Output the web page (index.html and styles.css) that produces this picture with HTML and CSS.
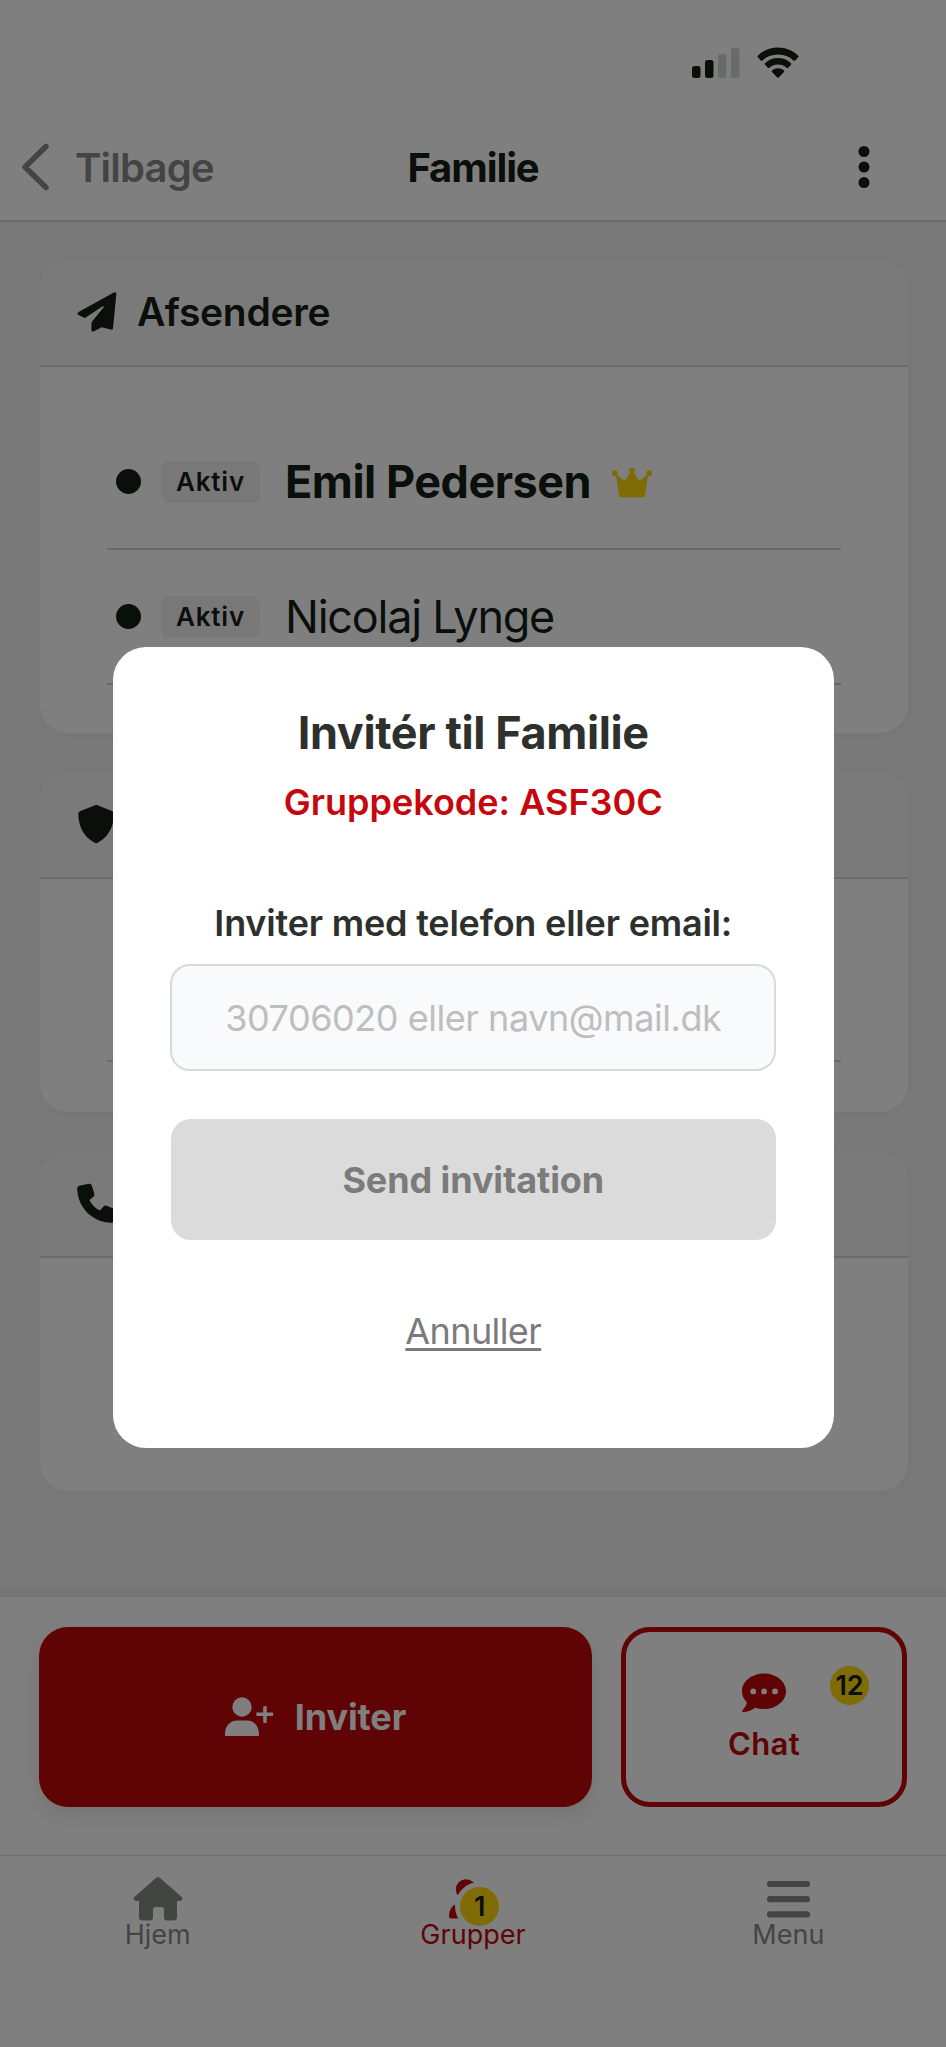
FILE: index.html
```html
<!DOCTYPE html>
<html lang="da">
<head>
<meta charset="utf-8">
<title>Familie</title>
<link rel="stylesheet" href="styles.css">
</head>
<body>
<div class="app">
  <div class="status">
    <svg class="signal" width="48" height="32" viewBox="0 0 48 32"><rect x="0" y="19" width="8.500" height="12" rx="2.500"/><rect x="13" y="13" width="8.500" height="18" rx="2.500"/><g class="faint"><rect x="26" y="7" width="8.500" height="24" rx="2.500"/><rect x="39" y="1" width="8.500" height="30" rx="2.500"/></g></svg>
    <svg class="wifi" width="42" height="32" viewBox="0 0 42 32"><path d="M21 .5C13 .5 6 3.500 .8 8.700q-.8.8 0 1.600L3.800 13.400q.9.8 1.800 0C9.600 9.600 14.800 7.500 21 7.500S32.400 9.600 36.400 13.400q.9.8 1.800 0L41.200 10.300q.8-.8 0-1.600C36 3.500 29 .5 21 .5Z"/><path d="M21 11c-5 0-9.600 1.900-13 5.200q-.8.8 0 1.600l2.800 2.900q.8.700 1.700 0c2.400-2.200 5.100-3.300 8.500-3.300s6.100 1.100 8.500 3.300q.9.700 1.700 0L34 17.800q.8-.8 0-1.600c-3.400-3.300-8-5.200-13-5.200Z"/><path d="M21 21.200c-2.300 0-4.400.8-6 2.200q-.8.800 0 1.600l5 5.200q1 1 2 0l5-5.200q.8-.8 0-1.600c-1.600-1.400-3.700-2.200-6-2.200Z"/></svg>
  </div>
  <header class="topbar">
    <div class="back">
      <svg width="30" height="50" viewBox="0 0 30 50"><path d="M26 4.500 5 25l21 20.500" fill="none" stroke="currentColor" stroke-width="5.500" stroke-linecap="round" stroke-linejoin="round"/></svg>
      <span>Tilbage</span>
    </div>
    <h1>Familie</h1>
    <svg class="kebab" width="12" height="46" viewBox="0 0 12 46"><circle cx="6" cy="7.500" r="5.500"/><circle cx="6" cy="23" r="5.500"/><circle cx="6" cy="38.500" r="5.500"/></svg>
  </header>

  <main class="content">
    <section class="card card-senders">
      <div class="card-head">
        <svg width="40" height="40" viewBox="0 0 40 40"><path d="M39.300 2.200 36 36.200q-.3 1.900-2.200 1.400l-8.300-2.200q-1.200-.3-2 .5l-6.600 3.300q-2.300 1-2.500-1.200v-6.200q0-1.600 1.200-3L26.500 15.400q.6-.8-.2-1.200-.4-.2-1 .2L9.200 25.200q-1.400.9-2.700.3L1.600 23q-2.200-1.400 0-3L36.800.4q2.700-1 2.500 1.800Z"/></svg>
        <h2>Afsendere</h2>
      </div>
      <div class="card-body">
        <div class="row"><i class="dot"></i><span class="tag">Aktiv</span><span class="name own">Emil Pedersen</span>
          <svg class="crown" width="40" height="32" viewBox="0 0 40 32"><path d="M33 30q-.3 1.300-1.500 1.300h-23Q7.300 31.300 7 30L4.300 11 3 10.200A3 3 0 1 1 5.700 8.200L6 9.400l5 4.200q1.600 1.200 3-.4l3.800-6.600a3 3 0 1 1 4.400 0l3.800 6.600q1.200 1.600 3 .4l5-4.200.3-1.200A3 3 0 1 1 37 10.200l-1.300.8Z"/></svg>
        </div>
        <div class="row"><i class="dot"></i><span class="tag">Aktiv</span><span class="name">Nicolaj Lynge</span></div>
      </div>
    </section>
    <section class="card card-shield">
      <div class="card-head">
        <svg width="40" height="40" viewBox="0 0 40 40"><path d="M18 1.200q1.200-.7 2.400 0L35.500 7.300q1.500.7 1.500 2.200c0 11-4 22.500-16.300 29.300q-1.500.7-3 0C5.300 32 1.300 20.500 1.300 9.500q0-1.500 1.500-2.200Z"/></svg>
      </div>
      <div class="card-body"><div class="row"></div></div>
    </section>
    <section class="card card-phone">
      <div class="card-head">
        <svg width="40" height="40" viewBox="0 0 40 40"><path d="M12.200.7 3 2.400Q.2 3 .2 5.300C.4 24.500 15.500 39.600 34.700 39.800q2.300 0 2.900-2.400l1.700-8.200q.4-2.200-1.600-3.100l-8.200-3.400q-1.800-.7-3 .7l-3.500 4.200C18.500 25.500 14.500 21.500 12.400 17l4-3.300q1.600-1.300.9-3.100L14.700 2.200Q14 .4 12.200.7Z"/></svg>
      </div>
      <div class="card-body"></div>
    </section>
  </main>

  <div class="actions">
    <div class="btn-invite">
      <svg width="50" height="40" viewBox="0 0 50 40"><circle cx="17" cy="10" r="9.700"/><path d="M0 39v-2C0 29 5 23.500 12 23.500h10c7 0 12 5.500 12 13.500v2ZM38.200 9.500q1.800-1 3.600 0v6h6q1 1.700 0 3.500h-6v6.500q-1.800 1-3.600 0V19h-6.500q-1-1.700 0-3.500h6.500Z"/></svg>
      <span>Inviter</span>
    </div>
    <div class="btn-chat">
      <svg width="44" height="40" viewBox="0 0 44 40"><path fill-rule="evenodd" d="M22 .5C9.800.5 0 8.400 0 18.200c0 4.200 1.800 8 4.800 11-.4 3.200-2 5.700-4.500 8.200-.6.800-.2 1.600.7 1.600 5 0 9-1.800 12-4.200 2.800.9 5.800 1.300 9 1.300 12.200 0 22-8 22-17.800S34.200.5 22 .5ZM11.200 21.300a2.900 2.900 0 1 1 0-5.800 2.900 2.900 0 0 1 0 5.800Zm10.900 0a2.900 2.900 0 1 1 0-5.800 2.900 2.900 0 0 1 0 5.800Zm10.900 0a2.900 2.900 0 1 1 0-5.800 2.900 2.900 0 0 1 0 5.800Z"/></svg>
      <span class="chat-label">Chat</span>
      <span class="badge badge-chat">12</span>
    </div>
  </div>

  <nav class="tabs">
    <div class="tab">
      <svg width="50" height="44" viewBox="0 0 50 44"><path d="M23 .9q2-1.600 4 0L48.800 20q1 1.200.4 2.600-.6 1.400-2.200 1.400H44v16q0 3.500-3.500 3.500H34q-3 0-3-3V33q0-3-3-3h-5q-3 0-3 3v7.500q0 3-3 3H9.500Q6 43.500 6 40V24H3q-1.600 0-2.200-1.400Q.2 21.200 1.200 20Z"/></svg>
      <span class="tab-label">Hjem</span>
    </div>
    <div class="tab tab-on">
      <svg width="50" height="44" viewBox="0 0 50 44"><circle cx="18" cy="12.500" r="10.200"/><path d="M3 41.500q-2 0-2-2C1 31 5.500 26.500 13 26.500h10v15Z"/></svg>
      <span class="badge badge-tab">1</span>
      <span class="tab-label">Grupper</span>
    </div>
    <div class="tab">
      <svg width="50" height="44" viewBox="0 0 50 44"><path d="M7 7h37M7 22.200h37M7 37.400h37" stroke="currentColor" stroke-width="6.200" stroke-linecap="round"/></svg>
      <span class="tab-label">Menu</span>
    </div>
  </nav>
</div>

<div class="backdrop">
  <div class="modal">
    <h3>Invitér til Familie</h3>
    <p class="code">Gruppekode: ASF30C</p>
    <p class="label">Inviter med telefon eller email:</p>
    <div class="field">30706020 eller navn@mail.dk</div>
    <div class="send">Send invitation</div>
    <span class="cancel">Annuller</span>
  </div>
</div>
</body>
</html>
```
FILE: styles.css
```css
* { box-sizing: border-box; margin: 0; padding: 0; }
body { width: 946px; height: 2047px; overflow: hidden; font-family: Inter, "Liberation Sans", sans-serif; color: #141f16; background: #fff; }
svg { display: block; flex: none; fill: currentColor; }
span, h1, h2, h3, p, .field, .send { white-space: nowrap; }
.app { width: 946px; height: 2047px; display: flex; flex-direction: column; }

.status { height: 114px; padding: 47px 147px 0 0; display: flex; justify-content: flex-end; gap: 17px; }
.faint { opacity: .18; }

.topbar { height: 108px; border-bottom: 2px solid #d9d9d9; display: grid; grid-template-columns: 1fr auto 1fr; align-items: center; padding: 0 76px 0 20px; }
.back { display: flex; align-items: center; gap: 25px; color: #868986; font-size: 40px; font-weight: 600; letter-spacing: -.8px; }
h1 { font-size: 40px; font-weight: 700; letter-spacing: -1.1px; padding-left: 56px; }
.kebab { justify-self: end; }

.content { height: 1375px; background: #f1f1f1; padding: 38px 38px 0 40px; display: flex; flex-direction: column; gap: 39px; }
.card { border-radius: 28px; background: #fff; overflow: hidden; box-shadow: 0 2px 8px rgba(0,0,0,.03); }
.card-senders { height: 473px; }
.card-shield, .card-phone { height: 340px; }
.card-head { height: 107px; background: #f5f5f5; border-bottom: 2px solid #d6d6d6; padding: 0 0 2px 37px; display: flex; align-items: center; gap: 20px; }
h2 { font-size: 39px; font-weight: 600; letter-spacing: -.3px; }
.card-body { padding: 48px 67px 0; }
.row { height: 135px; border-bottom: 2px solid #d3d3d3; display: flex; align-items: center; padding-left: 9px; }
.dot { width: 25px; height: 25px; border-radius: 50%; background: currentColor; }
.tag { width: 99px; height: 42px; margin: 0 25px 0 20px; border-radius: 8px; background: #f0f0f0; display: flex; align-items: center; justify-content: center; font-size: 26px; font-weight: 600; letter-spacing: .8px; }
.name { font-size: 45px; letter-spacing: -1.25px; }
.own { font-weight: 700; letter-spacing: -.5px; }
.crown { margin-left: 21px; color: #ffd90c; }

.actions { height: 258px; padding: 30px 39px 0; display: flex; gap: 29px; position: relative; box-shadow: 0 -4px 14px rgba(0,0,0,.05); background: #fff; }
.btn-invite { width: 553px; height: 180px; border-radius: 29px; background: #c0060a; color: #fff; display: flex; align-items: center; justify-content: center; gap: 20px; font-size: 36px; font-weight: 700; letter-spacing: -.1px; box-shadow: 0 8px 22px rgba(0,0,0,.1); }
.btn-chat { width: 286px; height: 180px; border-radius: 29px; border: 5px solid #c0060a; color: #c0060a; position: relative; display: flex; flex-direction: column; align-items: center; padding-top: 41px; }
.chat-label { font-size: 31px; font-weight: 600; line-height: 38px; margin-top: 12px; letter-spacing: .3px; }
.badge { position: absolute; width: 39px; height: 39px; border-radius: 50%; background: #ffd90c; color: #141f16; font-size: 27px; font-weight: 600; display: flex; align-items: center; justify-content: center; }
.badge-chat { right: 33px; top: 34px; }

.tabs { height: 192px; border-top: 1px solid #e3e3e3; display: grid; grid-template-columns: repeat(3, 1fr); color: #868a86; }
.tab { position: relative; padding-top: 21px; display: flex; flex-direction: column; align-items: center; font-size: 27px; }
.tab-label { position: relative; line-height: 32px; margin-top: -2px; }
.tab-on { color: #c0060a; }
.badge-tab { left: 145px; top: 31px; line-height: 30px; box-shadow: 0 0 0 5px #fff; }

.backdrop { position: absolute; inset: 0 0 auto; width: 946px; height: 2047px; background: rgba(0,0,0,.5); padding: 647px 0 0 112.5px; }
.modal { width: 721.5px; height: 801px; border-radius: 33px; background: #fff; color: #2d302d; padding: 59px 58px 0; display: flex; flex-direction: column; align-items: center; }
h3 { font-size: 45px; line-height: 54px; font-weight: 700; letter-spacing: -.4px; }
.code { font-size: 36px; line-height: 44px; margin-top: 20px; font-weight: 600; color: #c5080d; }
.label { font-size: 36px; line-height: 42px; margin-top: 78px; font-weight: 600; letter-spacing: -.2px; }
.field { width: 606px; height: 107px; margin-top: 20px; border: 2px solid #d8d9da; border-radius: 20px; background: #f8fafc; color: #bebebe; font-size: 36px; letter-spacing: -.45px; display: flex; align-items: center; justify-content: center; }
.send { width: 605px; height: 121px; margin-top: 48px; border-radius: 20px; background: #dbdbdb; color: #7b7b7b; font-size: 36px; font-weight: 700; letter-spacing: -.1px; display: flex; align-items: center; justify-content: center; }
.cancel { font-size: 36px; line-height: 42px; margin-top: 70px; color: #7b7b7b; letter-spacing: -.6px; text-decoration: underline; text-decoration-thickness: 2.5px; text-underline-offset: 4px; }
```
